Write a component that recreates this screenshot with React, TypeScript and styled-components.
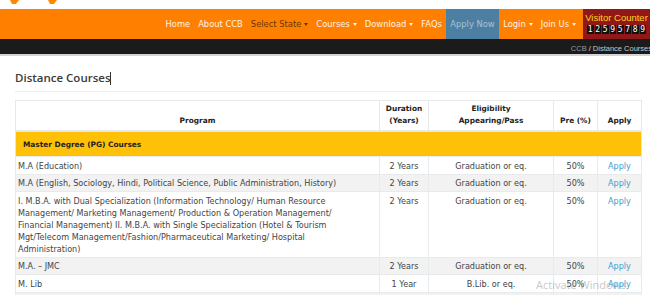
import React from 'react'
import styled, { createGlobalStyle } from 'styled-components'

const GlobalStyle = createGlobalStyle`
  html, body {
    margin: 0;
    padding: 0;
    background: #fff;
    overflow: hidden;
    font-family: "DejaVu Sans", "Open Sans", sans-serif;
  }
`

const Page = styled.div`
  position: relative;
  width: 650px;
  height: 295px;
  overflow: hidden;
`

const TopStrip = styled.div`
  height: 9px;
  display: flex;
  align-items: flex-start;
  padding-left: 10px;
  gap: 29px;
  background: #fff;
`

const Navbar = styled.nav`
  height: 30px;
  background: #ff8000;
  display: flex;
  justify-content: flex-end;
  align-items: stretch;
`

const NavItem = styled.a<{ $dark?: boolean; $muted?: boolean }>`
  display: flex;
  align-items: center;
  gap: 3px;
  padding: 0 ${({ $muted }) => ($muted ? '4.5px' : '4px')};
  font-size: 8.35px;
  color: ${({ $dark, $muted }) => ($dark ? '#6e3500' : $muted ? '#a9c3d4' : '#fff3e6')};
  background: ${({ $muted }) => ($muted ? '#4d7fa3' : 'transparent')};
  white-space: nowrap;
`

const Caret = styled.span`
  width: 0;
  height: 0;
  border-left: 2.5px solid transparent;
  border-right: 2.5px solid transparent;
  border-top: 3px solid currentColor;
`

const Counter = styled.div`
  width: 67px;
  margin-left: 3px;
  background: #921818;
  display: flex;
  flex-direction: column;
  align-items: center;
  padding-top: 3px;
  gap: 2px;
`

const CounterTitle = styled.div`
  font-family: "Liberation Sans", Arial, sans-serif;
  font-size: 9.5px;
  color: #ffd21f;
  white-space: nowrap;
`

const Digits = styled.div`
  display: flex;
  gap: 1px;
`

const Digit = styled.span`
  width: 6.5px;
  height: 9px;
  background: #111;
  color: #fff;
  font-family: "DejaVu Sans Mono", monospace;
  font-size: 8px;
  line-height: 9px;
  text-align: center;
`

const Breadcrumb = styled.div`
  background: #1b1b1b;
  border-bottom: 2px solid #d4d4d4;
  display: flex;
  justify-content: flex-end;
  align-items: center;
  font-family: "Liberation Sans", Arial, sans-serif;
  font-size: 7.5px;
  color: #9a9a9a;
  padding-top: 3px;
  height: 12px;
  span { color: #ddd; margin: 0 2px; }
  b { font-weight: normal; color: #c8c8c8; margin-right: -2px; }
`

const Content = styled.main`
  padding: 0 10px 0 15px;
`

const Title = styled.h2`
  margin: 0;
  padding: 14px 0 6px;
  font-family: "Open Sans", sans-serif;
  font-size: 11.5px;
  font-weight: 600;
  color: #3a3a3a;
  border-bottom: 1px solid #eeeeee;
  &::after {
    content: '';
    display: inline-block;
    width: 1px;
    height: 13px;
    background: #333;
    vertical-align: -3px;
  }
`

const Table = styled.table`
  margin-top: 8px;
  width: 626px;
  border-collapse: collapse;
  border: 1px solid #e3e6e8;
  font-size: 8.1px;
  color: #444;
  table-layout: fixed;
`

const Th = styled.th`
  font-size: 7.4px;
  font-weight: 700;
  color: #222;
  vertical-align: bottom;
  text-align: center;
  padding: 2px 2px 3px;
  line-height: 12px;
  border: 1px solid #e6e8ea;
  border-bottom: 2px solid #e6e8ea;
`

const Group = styled.td`
  background: #ffc107;
  font-size: 7.4px;
  font-weight: 700;
  color: #222;
  padding: 0 7px;
  height: 24px;
`

const Row = styled.tr<{ $striped?: boolean }>`
  background: ${({ $striped }) => ($striped ? '#f2f2f2' : '#fff')};
`

const Td = styled.td<{ $center?: boolean }>`
  vertical-align: top;
  text-align: ${({ $center }) => ($center ? 'center' : 'left')};
  padding: 2.5px ${({ $center }) => ($center ? '2px' : '30px')} 2px 2px;
  line-height: 12px;
  border: 1px solid #e8eaec;
`

const ApplyLink = styled.a`
  color: #3a9fd1;
`

const Watermark = styled.div`
  position: absolute;
  left: 536px;
  top: 277px;
  font-family: "Open Sans", sans-serif;
  font-size: 11px;
  color: rgba(150, 150, 150, 0.55);
  white-space: nowrap;
  pointer-events: none;
`

const rows = [
  { program: 'M.A (Education)', dur: '2 Years', elig: 'Graduation or eq.' },
  { program: 'M.A (English, Sociology, Hindi, Political Science, Public Administration, History)', dur: '2 Years', elig: 'Graduation or eq.' },
  {
    program:
      'I. M.B.A. with Dual Specialization (Information Technology/ Human Resource Management/ Marketing Management/ Production & Operation Management/ Financial Management) II. M.B.A. with Single Specialization (Hotel & Tourism Mgt/Telecom Management/Fashion/Pharmaceutical Marketing/ Hospital Administration)',
    dur: '2 Years',
    elig: 'Graduation or eq.',
  },
  { program: 'M.A. – JMC', dur: '2 Years', elig: 'Graduation or eq.' },
  { program: 'M. Lib', dur: '1 Year', elig: 'B.Lib. or eq.' },
  { program: 'M.Sc (IT)', dur: '2 Years', elig: 'Graduation or eq.' },
]

const LogoBit = ({ color }: { color: string }) => (
  <svg width="9" height="4" viewBox="0 0 9 4">
    <path d="M0 0 L9 0 L6 4 L2 4 Z" fill={color} />
  </svg>
)

export default function App() {
  return (
    <Page>
      <GlobalStyle />
      <TopStrip>
        <LogoBit color="#ff8a00" />
        <LogoBit color="#ff8a00" />
      </TopStrip>
      <Navbar>
        <NavItem>Home</NavItem>
        <NavItem>About CCB</NavItem>
        <NavItem $dark>Select State <Caret /></NavItem>
        <NavItem>Courses <Caret /></NavItem>
        <NavItem>Download <Caret /></NavItem>
        <NavItem>FAQs</NavItem>
        <NavItem $muted>Apply Now</NavItem>
        <NavItem>Login <Caret /></NavItem>
        <NavItem>Join Us <Caret /></NavItem>
        <Counter>
          <CounterTitle>Visitor Counter</CounterTitle>
          <Digits>
            {'12595789'.split('').map((d, i) => (
              <Digit key={i}>{d}</Digit>
            ))}
          </Digits>
        </Counter>
      </Navbar>
      <Breadcrumb>
        CCB<span>/</span><b>Distance Courses</b>
      </Breadcrumb>
      <Content>
        <Title>Distance Courses</Title>
        <Table>
          <colgroup>
            <col style={{ width: 364 }} />
            <col style={{ width: 49 }} />
            <col style={{ width: 125 }} />
            <col style={{ width: 44 }} />
            <col style={{ width: 44 }} />
          </colgroup>
          <thead>
            <tr>
              <Th>Program</Th>
              <Th>Duration<br />(Years)</Th>
              <Th>Eligibility<br />Appearing/Pass</Th>
              <Th>Pre (%)</Th>
              <Th>Apply</Th>
            </tr>
          </thead>
          <tbody>
            <tr>
              <Group colSpan={5}>Master Degree (PG) Courses</Group>
            </tr>
            {rows.map((r, i) => (
              <Row key={i} $striped={i % 2 === 1}>
                <Td>{r.program}</Td>
                <Td $center>{r.dur}</Td>
                <Td $center>{r.elig}</Td>
                <Td $center>50%</Td>
                <Td $center><ApplyLink>Apply</ApplyLink></Td>
              </Row>
            ))}
          </tbody>
        </Table>
      </Content>
      <Watermark>Activate Windows</Watermark>
    </Page>
  )
}
